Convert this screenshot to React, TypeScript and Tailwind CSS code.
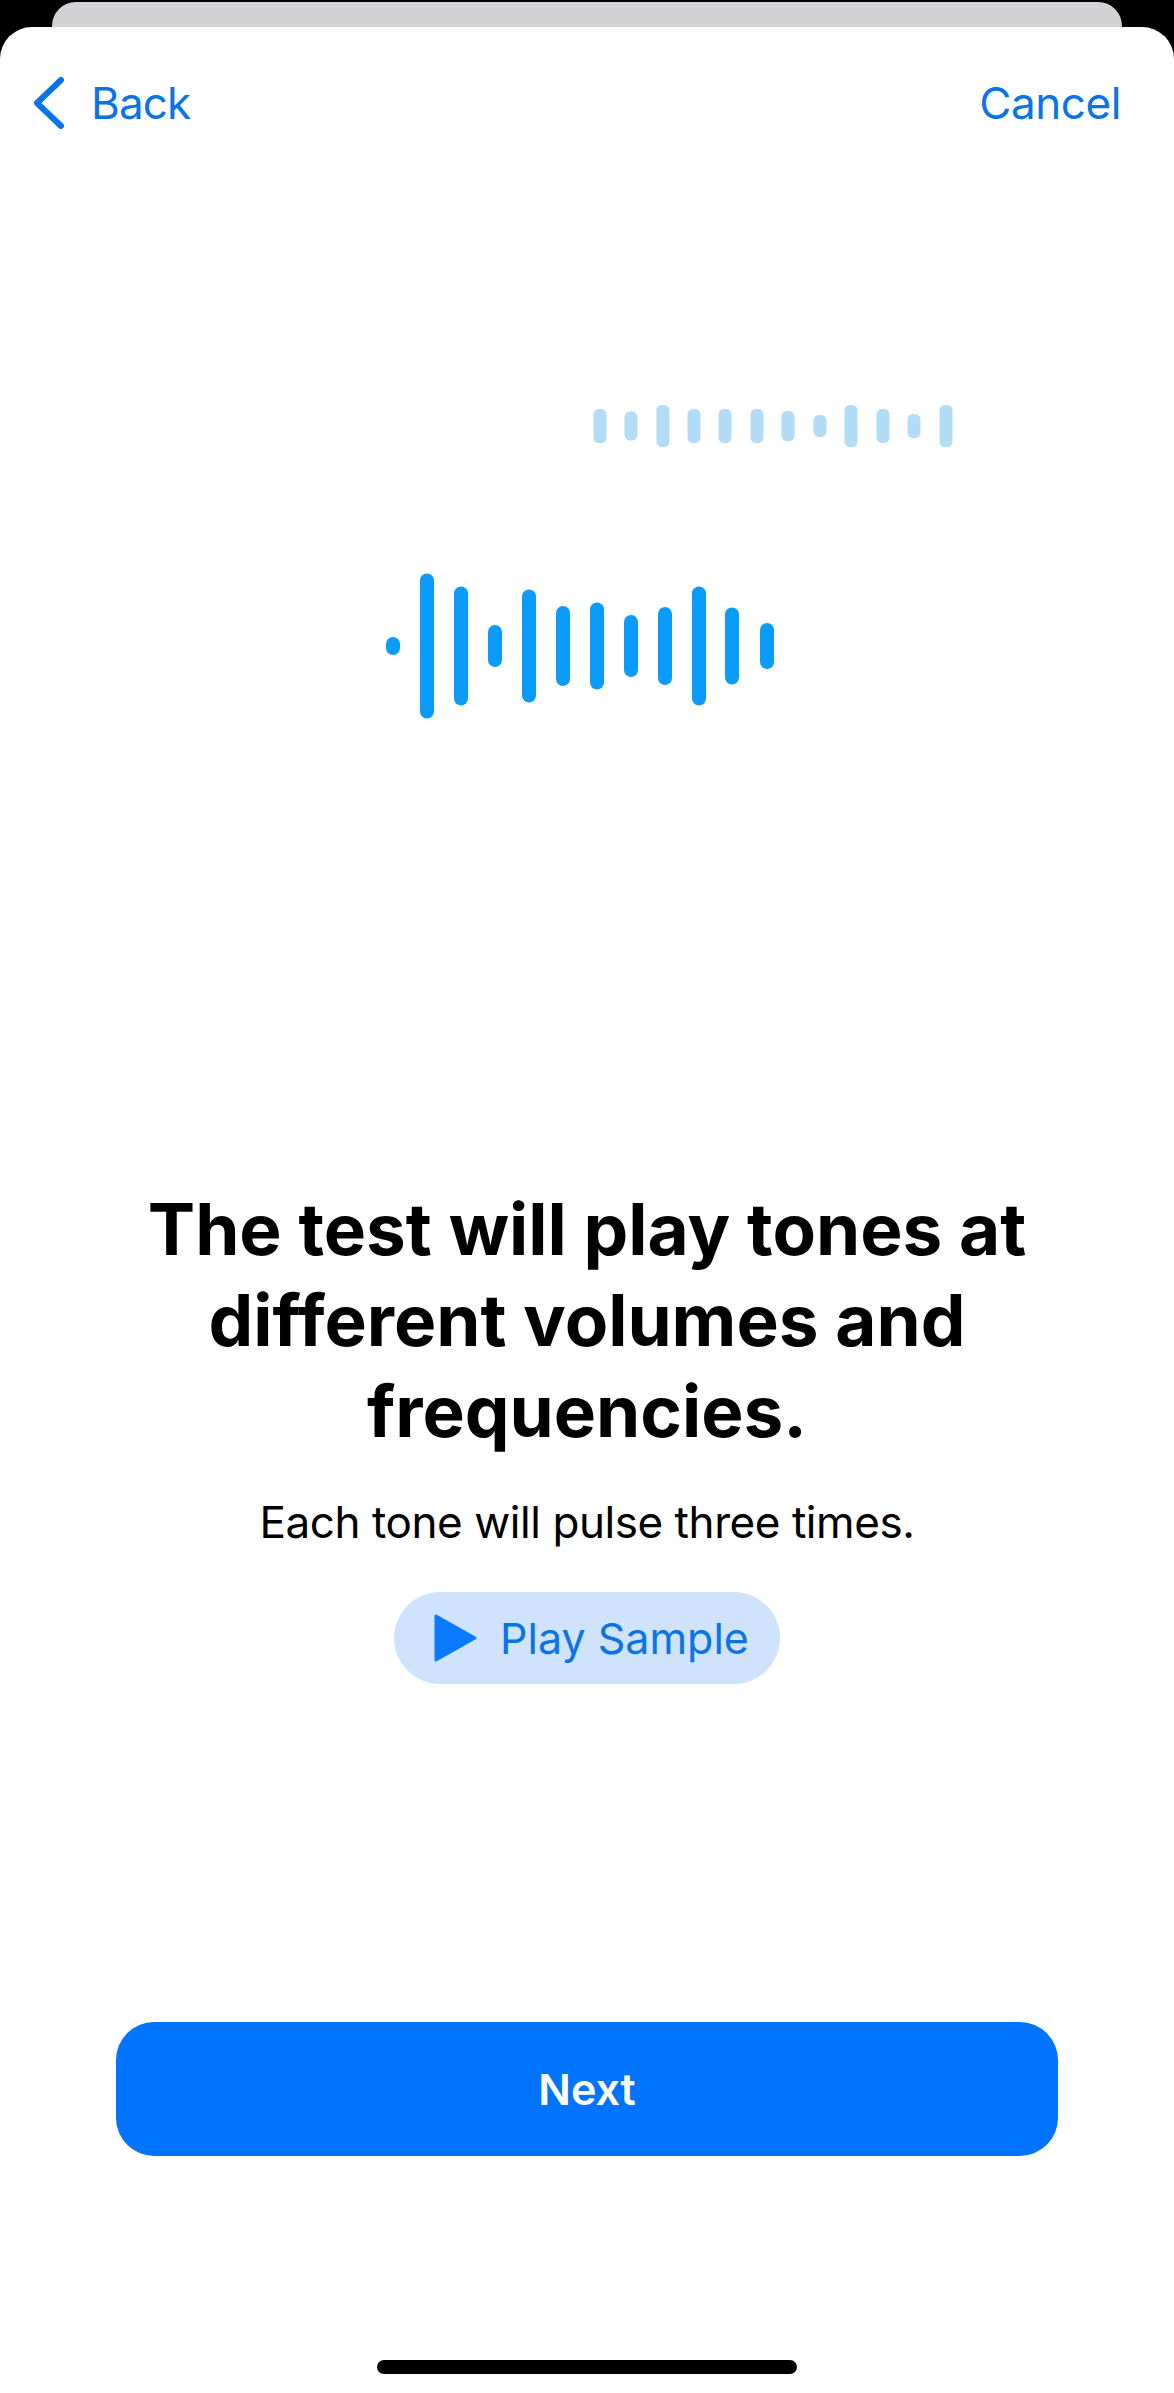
const font = { fontFamily: 'Inter, "Liberation Sans", sans-serif' };

// [x center, height] of each bar, in page pixels
const toneBars = [
  [600, 34], [631, 29], [663, 42], [694, 34], [725, 34], [757, 34],
  [788, 30], [820, 22], [851, 42], [883, 34], [914, 24], [946, 42],
];
const voiceBars = [
  [393, 18], [427, 145], [461, 119], [495, 42], [529, 113], [563, 80],
  [597, 87], [631, 62], [665, 78], [699, 119], [732, 77], [767, 46],
];

function Waves() {
  return (
    <svg width="1174" height="350" viewBox="0 0 1174 350" className="block" fill="none">
      {toneBars.map(([x, h]) => (
        <rect key={x} x={x - 6.5} y={31 - h / 2} width="13" height={h} rx="5.5" fill="#b3dcf6" />
      ))}
      {voiceBars.map(([x, h]) => (
        <rect key={x} x={x - 7} y={251 - h / 2} width="14" height={h} rx="7" fill="#0a9bfb" />
      ))}
    </svg>
  );
}

export default function App() {
  return (
    <div className="flex h-[2393px] w-[1174px] flex-col overflow-hidden bg-black" style={font}>
      <div className="mx-[52px] mt-[2px] h-[25px] shrink-0 rounded-t-[24px] bg-[#d3d3d6]" />
      <div className="flex flex-1 flex-col rounded-t-[32px] bg-white">
        <header className="flex items-center justify-between pl-[32px] pr-[53px] pt-[49px] text-[#0a74e6]">
          <div className="flex items-center gap-[25px]">
            <svg width="34" height="54" viewBox="0 0 34 54" fill="none" stroke="currentColor" strokeWidth="6" strokeLinecap="round" strokeLinejoin="round">
              <path d="M29 4 L5 27 L29 50" />
            </svg>
            <span className="text-[44px] leading-[54px] tracking-[-0.02em]">Back</span>
          </div>
          <span className="text-[44px] leading-[54px] tracking-[-0.01em]">Cancel</span>
        </header>

        <div className="mt-[265px]">
          <Waves />
        </div>

        <h1 className="mt-[439px] text-center text-[71px] font-bold leading-[91px] text-black">
          The test will play tones at
          <br />
          different volumes and
          <br />
          frequencies.
        </h1>
        <p className="mt-[38px] text-center text-[44px] leading-[54px] tracking-[-0.01em] text-black">Each tone will pulse three times.</p>

        <div className="mt-[43px] flex justify-center">
          <div className="flex h-[92px] w-[386px] items-center gap-[22px] rounded-full bg-[#cfe4fc] pl-[38px]">
            <svg width="46" height="50" viewBox="0 0 46 50">
              <path d="M4 3 L43 25 L4 47 Z" fill="#0a7aff" stroke="#0a7aff" strokeWidth="3" strokeLinejoin="round" />
            </svg>
            <span className="text-[43px] leading-[52px] text-[#0a74e6]">Play Sample</span>
          </div>
        </div>

        <button className="mx-auto mt-[338px] flex h-[134px] w-[942px] items-center justify-center rounded-[38px] bg-[#0074fe] text-[43px] font-semibold text-white">
          Next
        </button>

        <div className="mx-auto mt-[204px] h-[14px] w-[420px] rounded-full bg-black" />
      </div>
    </div>
  );
}
